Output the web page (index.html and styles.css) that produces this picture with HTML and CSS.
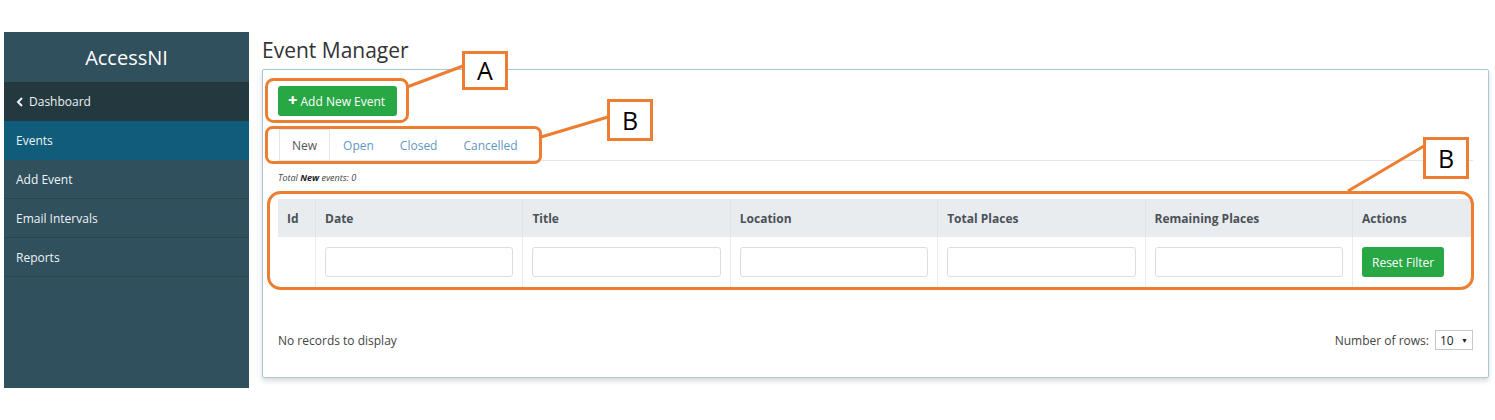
FILE: index.html
```html
<!DOCTYPE html>
<html lang="en">
<head>
    <meta charset="UTF-8">
    <meta name="viewport" content="width=device-width, initial-scale=1.0">
    <title>AccessNI - Event Manager</title>
    <link rel="stylesheet" href="styles.css">
</head>
<body>
    <div class="page">
        <aside class="sidebar">
            <div class="brand">AccessNI</div>
            <a class="nav-item back" href="#">
                <svg class="chev" width="8" height="10" viewBox="0 0 8 10"><path d="M6 1 L2 5 L6 9" fill="none" stroke="#eef3f5" stroke-width="2"/></svg>
                Dashboard
            </a>
            <a class="nav-item active" href="#">Events</a>
            <a class="nav-item" href="#">Add Event</a>
            <a class="nav-item" href="#">Email Intervals</a>
            <a class="nav-item" href="#">Reports</a>
        </aside>

        <main class="main">
            <h1>Event Manager</h1>
            <div class="panel">
                <button class="btn btn-success btn-add"><span class="plus">+</span> Add New Event</button>

                <ul class="tabs">
                    <li class="tab active">New</li>
                    <li class="tab">Open</li>
                    <li class="tab">Closed</li>
                    <li class="tab">Cancelled</li>
                </ul>

                <p class="total">Total <b>New</b> events: 0</p>

                <table class="grid">
                    <thead>
                        <tr>
                            <th class="col-id">Id</th>
                            <th>Date</th>
                            <th>Title</th>
                            <th>Location</th>
                            <th>Total Places</th>
                            <th>Remaining Places</th>
                            <th class="col-actions">Actions</th>
                        </tr>
                    </thead>
                    <tbody>
                        <tr class="filter-row">
                            <td></td>
                            <td><input type="text"></td>
                            <td><input type="text"></td>
                            <td><input type="text"></td>
                            <td><input type="text"></td>
                            <td><input type="text"></td>
                            <td><button class="btn btn-success btn-reset">Reset Filter</button></td>
                        </tr>
                    </tbody>
                </table>

                <div class="grid-footer">
                    <span>No records to display</span>
                    <label class="rows">Number of rows:
                        <span class="select">10 <span class="caret">&#9660;</span></span>
                    </label>
                </div>
            </div>
        </main>
    </div>

    <!-- callouts drawn over the page -->
    <svg class="callouts" width="1495" height="420" viewBox="0 0 1495 420">
        <g fill="none" stroke="#ed7d31" stroke-width="3">
            <rect x="266.5" y="79.5" width="141" height="42" rx="7"/>
            <rect x="266.5" y="127.5" width="274" height="35" rx="6"/>
            <rect x="268.5" y="192.5" width="1204" height="96" rx="12"/>
            <line x1="407" y1="87" x2="463" y2="66"/>
            <line x1="541" y1="137" x2="608" y2="117"/>
            <line x1="1348" y1="191" x2="1424" y2="146"/>
            <rect x="463.5" y="52.5" width="43" height="36" fill="#fff"/>
            <rect x="608.5" y="100.5" width="43" height="39" fill="#fff"/>
            <rect x="1424.5" y="138.5" width="43" height="39" fill="#fff"/>
        </g>
        <g class="callout-label" text-anchor="middle">
            <text x="485" y="80">A</text>
            <text x="630" y="130">B</text>
            <text x="1446" y="168">B</text>
        </g>
    </svg>
</body>
</html>
```

FILE: styles.css
```css
body {
    margin: 0;
    background: #fff;
    font-family: "Open Sans", "Noto Sans", sans-serif;
    color: #333;
}
.page {
    display: flex;
    align-items: flex-start;
    padding: 32px 6px 0 4px;
}

/* sidebar */
.sidebar {
    width: 245px;
    height: 356px;
    flex-shrink: 0;
    background-color: #2f505c;
    display: flex;
    flex-direction: column;
}
.brand {
    height: 50px;
    line-height: 52px;
    text-align: center;
    color: #fff;
    font-size: 20px;
}
.nav-item {
    display: flex;
    align-items: center;
    gap: 5px;
    height: 38px;
    flex-shrink: 0;
    padding-left: 12px;
    color: #eef3f5;
    font-size: 12px;
    text-decoration: none;
    border-bottom: 1px solid #29464f;
}
.nav-item.back {
    background-color: #24383f;
    height: 39px;
    border-bottom: none;
}
.nav-item.active {
    background-color: #0f5d7a;
    height: 39px;
    border-bottom: none;
}

/* main */
.main {
    flex: 1;
    margin-left: 13px;
}
h1 {
    margin: 7px 0 7px;
    font-size: 21px;
    font-weight: 400;
    color: #333;
    line-height: 23px;
}
.panel {
    border: 1px solid #a7c8da;
    border-radius: 2px;
    box-shadow: 0 3px 5px rgba(0,0,0,0.15);
    padding: 16px 15px 20px 15px;
    height: 271px;
}

.btn {
    border: none;
    border-radius: 3px;
    color: #fff;
    font-family: inherit;
    cursor: pointer;
}
.btn-success {
    background-color: #28a745;
}
.btn-add {
    height: 30px;
    padding: 0 12px 0 10px;
    font-size: 12px;
}
.plus {
    font-weight: 800;
    font-size: 16px;
    line-height: 10px;
}

/* tabs */
.tabs {
    list-style: none;
    margin: 13px 0 0;
    padding: 0 0 0 1px;
    display: flex;
    border-bottom: 1px solid #e3e6ea;
    height: 31px;
}
.tab {
    padding: 0 12px;
    line-height: 31px;
    font-size: 12px;
    color: #5f98c2;
    border: 1px solid transparent;
    border-bottom: none;
}
.tab.active {
    color: #555;
    border-color: #e3e6ea;
    background: #fff;
}

.total {
    margin: 10px 0 15px;
    font-size: 9px;
    font-style: italic;
    color: #444;
}
.total b {
    color: #222;
}

/* table */
.grid {
    width: 100%;
    border-collapse: collapse;
    table-layout: fixed;
    font-size: 12px;
}
.grid th {
    background-color: #e9ecef;
    color: #4b5157;
    text-align: left;
    font-weight: 700;
    height: 38px;
    padding: 0 9px;
    border-left: 1px solid #dfe3e6;
}
.grid th:first-child,
.grid td:first-child {
    border-left: none;
}
.grid .col-id {
    width: 19px;
}
.grid .col-actions {
    width: 102px;
}
.grid td {
    height: 50px;
    padding: 0 9px;
    border-left: 1px solid #e9ecef;
    border-bottom: 1px solid #e9ecef;
}
.grid input {
    width: 100%;
    height: 30px;
    box-sizing: border-box;
    border: 1px solid #d9dee2;
    border-radius: 3px;
}
.btn-reset {
    height: 30px;
    padding: 0 10px;
    font-size: 12px;
}

.grid-footer {
    display: flex;
    justify-content: space-between;
    align-items: center;
    margin-top: 42px;
    font-size: 12px;
    color: #444;
}
.rows {
    display: flex;
    align-items: center;
    gap: 6px;
}
.select {
    display: inline-flex;
    align-items: center;
    justify-content: space-between;
    width: 28px;
    height: 18px;
    padding: 0 4px;
    border: 1px solid #c7c7c7;
    color: #222;
}
.caret {
    font-size: 7px;
}

/* annotation callouts */
.callouts {
    position: absolute;
    left: 0;
    top: 0;
    pointer-events: none;
}
.callout-label text {
    font-family: "Open Sans", sans-serif;
    font-size: 25px;
    fill: #000;
}
```
